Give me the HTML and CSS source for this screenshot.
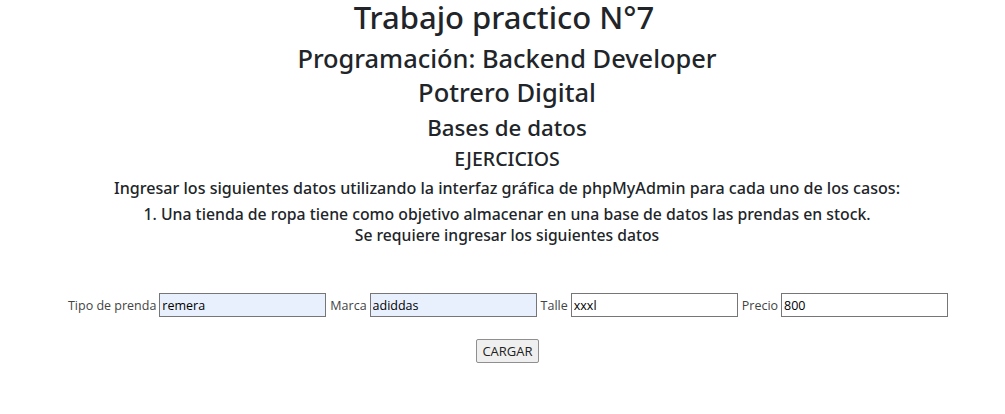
FILE: index.html
```html
<!DOCTYPE html>
<html lang="es">
<head>
<meta charset="utf-8">
<title>Trabajo practico N°7</title>
<link rel="stylesheet" href="styles.css">
</head>
<body>
<header class="heads">
  <h1 class="t1">Trabajo practico N°7</h1>
  <h2 class="t2">Programación: Backend Developer</h2>
  <h2 class="t3">Potrero Digital</h2>
  <h3 class="t4">Bases de datos</h3>
  <h4 class="t5">EJERCICIOS</h4>
  <h5 class="t6">Ingresar los siguientes datos utilizando la interfaz gráfica de phpMyAdmin para cada uno de los casos:</h5>
  <h5 class="t7">1. Una tienda de ropa tiene como objetivo almacenar en una base de datos las prendas en stock.</h5>
  <h5 class="t8">Se requiere ingresar los siguientes datos</h5>
</header>
<form class="form">
  <div class="row">
    <label class="lbl">Tipo de prenda</label><input class="inp auto" type="text" value="remera">
    <label class="lbl">Marca</label><input class="inp auto" type="text" value="adiddas">
    <label class="lbl">Talle</label><input class="inp" type="text" value="xxxl">
    <label class="lbl">Precio</label><input class="inp" type="text" value="800">
  </div>
  <div class="btnrow"><button class="btn" type="button">CARGAR</button></div>
</form>
</body>
</html>
```
FILE: styles.css
```css
html, body { margin: 0; padding: 0; background: #fff; }
body { font-family: "Open Sans", "Noto Sans", sans-serif; color: #212529; }
.heads { text-align: center; padding-left: 9px; font-family: "Noto Sans", "Open Sans", sans-serif; }
.heads h1, .heads h2, .heads h3, .heads h4, .heads h5 { margin: 0; font-weight: 500; white-space: nowrap; }
.heads .t1 { font-size: 31px; line-height: 34px; margin-left: -6px; }
.heads .t2 { font-size: 25.4px; line-height: 36px; margin-top: 6px; }
.heads .t3 { font-size: 25.5px; line-height: 32px; }
.heads .t4 { font-size: 22.3px; line-height: 30px; margin-top: 5px; }
.heads .t5 { font-size: 19.5px; line-height: 31px; }
.heads .t6 { font-size: 16.1px; line-height: 29px; }
.heads .t7 { font-size: 15.8px; line-height: 22px; margin-top: 0; }
.heads .t8 { font-size: 15.7px; line-height: 21px; }
.form { margin-top: 47px; }
.row { display: flex; justify-content: center; align-items: center; gap: 3px; padding-left: 10px; font-size: 12.5px; }
.lbl { color: #444; margin-left: 1px; }
.inp { width: 161px; height: 18px; border: 1px solid #767676; padding: 2px 2px; font-family: inherit; font-size: 12.5px; color: #000; margin: 0; }
.inp.auto { background: #e8f0fe; }
.btnrow { text-align: center; margin-top: 22px; padding-left: 10px; }
.btn { font-family: inherit; font-size: 13px; height: 24px; padding: 0 5px; border: 1px solid #8f8f8f; border-radius: 2px; background: #efefef; color: #222; }
```
